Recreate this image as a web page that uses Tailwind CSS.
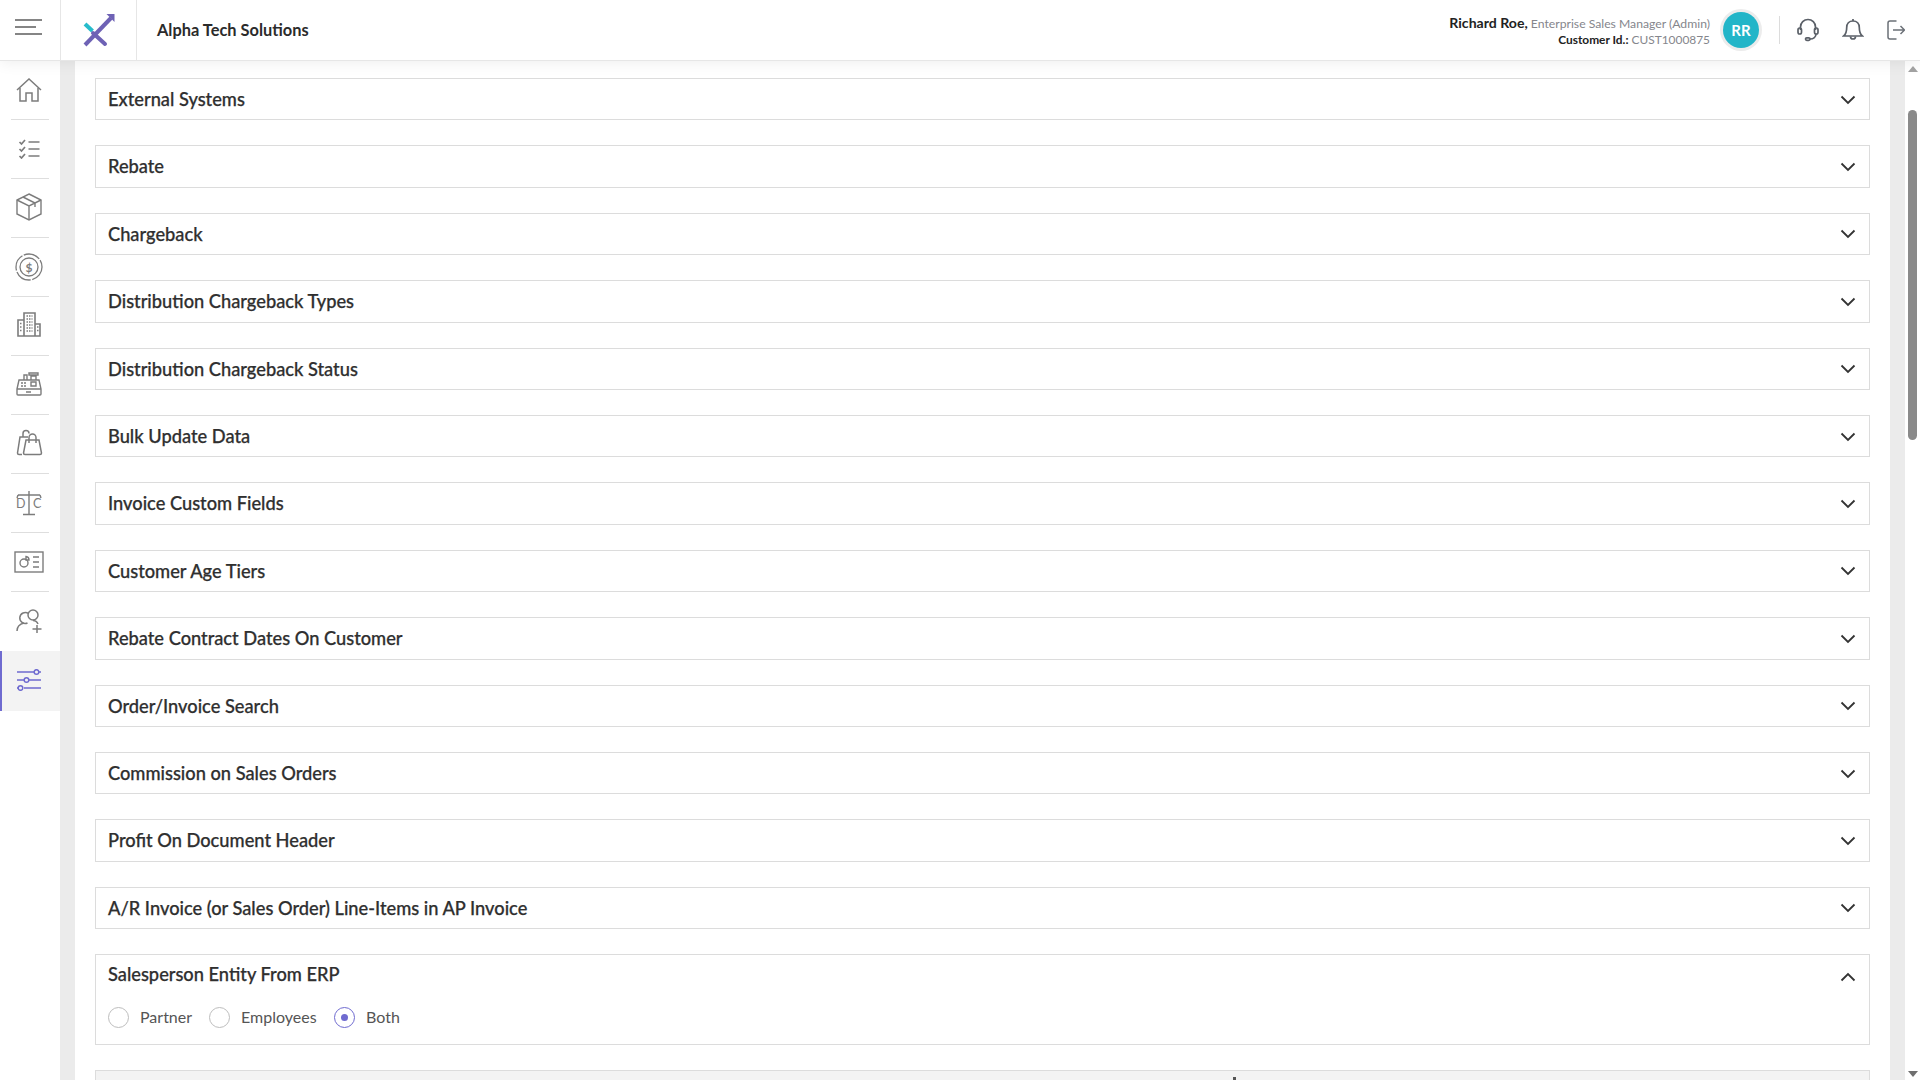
<!DOCTYPE html>
<html lang="en">
<head>
  <meta charset="UTF-8" />
  <title>Alpha Tech Solutions</title>
  <script src="https://cdn.jsdelivr.net/npm/@tailwindcss/browser@4"></script>
</head>
<body class="h-screen overflow-hidden bg-white font-['Lato','Noto_Sans',sans-serif] text-[#2f2f2f]">

  <!-- top bar -->
  <header class="relative z-10 flex h-[61px] items-stretch border-b border-[#e6e6e6] bg-white shadow-[0_2px_14px_rgba(0,0,0,0.07)]">
    <div class="flex w-[61px] items-center border-r border-[#e6e6e6] pl-[15px]">
      <svg class="mb-[7px]" width="28" height="18" viewBox="0 0 28 18" fill="none" stroke="#858585" stroke-width="2"><path d="M0 2h27M0 9h21M0 16h27"/></svg>
    </div>
    <div class="flex w-[76px] items-center justify-center border-r border-[#e6e6e6]">
      <svg width="34" height="34" viewBox="0 0 34 34" fill="none" stroke-width="4">
        <path d="M3 32 29 5" stroke="#6e62b5"/>
        <path d="M24.500 1H32.500V9Z" fill="#6e62b5" stroke="none"/>
        <path d="M3 11l7.500 7" stroke="#27bccb"/>
        <path d="M11 20 23 31" stroke="#6e62b5" stroke-linecap="round"/>
      </svg>
    </div>
    <div class="flex items-center pt-[1px] pl-5 text-[16.400px] font-bold text-[#2b2b2b]">Alpha Tech Solutions</div>

    <div class="ml-auto flex items-center">
      <div class="pt-[2px] text-right text-[12.200px] leading-[16px] text-[#85868c]">
        <div><span class="text-[14.100px] font-bold text-[#222]">Richard Roe,</span> Enterprise Sales Manager (Admin)</div>
        <div class="text-[11.900px]"><span class="font-bold text-[#222]">Customer Id.:</span> CUST1000875</div>
      </div>
      <div class="ml-[10px] flex size-[42px] items-center justify-center rounded-full bg-[#ececec]">
        <div class="flex size-9 items-center justify-center rounded-full bg-[#22b5c8] text-[15px] font-bold text-white">RR</div>
      </div>
      <div class="ml-[17px] h-7 w-px bg-[#dcdcdc]"></div>
      <svg class="ml-[17px]" width="22" height="24" viewBox="0 0 22 24" fill="none" stroke="#5b6068" stroke-width="1.700">
        <path d="M3.500 12V9a7.500 7.500 0 0 1 15 0v3"/>
        <rect x="1" y="10" width="3.500" height="6" rx="1.700"/>
        <rect x="17.500" y="10" width="3.500" height="6" rx="1.700"/>
        <path d="M19 16c0 3-2.500 5-6 5"/>
        <rect x="8.500" y="19.800" width="4.500" height="2.600" rx="1.300"/>
      </svg>
      <svg class="ml-[23px]" width="22" height="24" viewBox="0 0 22 24" fill="none" stroke="#5b6068" stroke-width="1.700">
        <path d="M11 3c-4 0-6.300 3-6.300 6.500 0 5-1.200 7-3 8.500h18.600c-1.800-1.500-3-3.500-3-8.500C17.300 6 15 3 11 3Z"/>
        <path d="M11 1v2M8.500 18.500a2.500 2.500 0 0 0 5 0"/>
      </svg>
      <svg class="mr-[15px] ml-[23px]" width="18" height="20" viewBox="0 0 18 20" fill="none" stroke="#6b7077" stroke-width="1.500">
        <path d="M9.500 1H3a2 2 0 0 0-2 2v14a2 2 0 0 0 2 2h6.500"/>
        <path d="M6 10h11.500M13.500 6l4 4-4 4"/>
      </svg>
    </div>
  </header>

  <div class="flex h-[1019px]">
    <!-- side nav -->
    <nav class="w-[60px] shrink-0 bg-white">
      <a class="mx-[11px] flex h-[59px] items-center justify-center border-b border-[#dedede] pr-[2px]">
        <svg width="26" height="24" viewBox="0 0 26 24" fill="none" stroke="#7c7c7c" stroke-width="1.500">
          <path d="M1 12 13 1l12 11"/><path d="M4 10v13h6v-8h6v8h6V10"/>
        </svg>
      </a>
      <a class="mx-[11px] flex h-[59px] items-center justify-center border-b border-[#dedede] pr-[2px]">
        <svg width="23" height="20" viewBox="0 0 22 20" fill="none" stroke="#7c7c7c" stroke-width="1.700">
          <path d="M1 3l2 2 3.500-4M1 10l2 2 3.500-4M1 17l2 2 3.500-4"/><path d="M10 3h11M10 10h11M10 17h11"/>
        </svg>
      </a>
      <a class="mx-[11px] flex h-[59px] items-center justify-center border-b border-[#dedede] pr-[2px]">
        <svg class="mb-[2px]" width="26" height="28" viewBox="0 0 26 28" fill="none" stroke="#7c7c7c" stroke-width="1.400">
          <path d="M13 1 25 7v14l-12 6-12-6V7Z"/><path d="M1 7l12 6 12-6M13 13v14M7 4l12 6v4"/>
        </svg>
      </a>
      <a class="mx-[11px] flex h-[59px] items-center justify-center border-b border-[#dedede] pr-[2px]">
        <svg class="mb-[1px]" width="28" height="28" viewBox="0 0 28 28" fill="none" stroke="#7c7c7c" stroke-width="1.300">
          <circle cx="14" cy="14" r="13" stroke-dasharray="17 1.500"/><circle cx="14" cy="14" r="9"/>
          <text x="14" y="18.500" text-anchor="middle" font-size="12" font-weight="700" fill="#7c7c7c" stroke="none" font-family="Lato">$</text>
        </svg>
      </a>
      <a class="mx-[11px] flex h-[59px] items-center justify-center border-b border-[#dedede] pr-[2px]">
        <svg class="mb-[4px]" width="24" height="26" viewBox="0 0 24 26" fill="none" stroke="#7c7c7c" stroke-width="1.600">
          <path d="M7 25V2h11v23M7 25V9H1v16ZM18 25V13h5v12ZM1 25h22"/>
          <path d="M9.500 5h6M9.500 8h6M9.500 11h6M9.500 14h6M9.500 17h6M9.500 20h6M3 12.500h2.500M3 16h2.500M3 19.500h2.500M20 16h2M20 19.500h2" stroke-dasharray="1.500 1" stroke-width="1.700"/>
        </svg>
      </a>
      <a class="mx-[11px] flex h-[59px] items-center justify-center border-b border-[#dedede] pr-[2px]">
        <svg class="mb-[4px]" width="26" height="25" viewBox="0 0 26 25" fill="none" stroke="#7c7c7c" stroke-width="1.400">
          <path d="M1 18 3 9h20l2 9v5a1 1 0 0 1-1 1H2a1 1 0 0 1-1-1ZM1 18h24M10 21h5"/>
          <path d="M8 9V4h3v5M15 9V5h5v4M13 2h9v2h-9ZM15 11h5v4h-5Z"/>
          <path d="M5 12h5M5 15h5" stroke-dasharray="2 1"/>
        </svg>
      </a>
      <a class="mx-[11px] flex h-[59px] items-center justify-center border-b border-[#dedede] pr-[2px]">
        <svg class="mb-[3px]" width="27" height="27" viewBox="0 0 27 27" fill="none" stroke="#7c7c7c" stroke-width="1.500">
          <path d="M6 25.500H3c-1 0-1.500-.5-1.500-1.500L4 8h8"/><path d="M7 8V4.500a3 3 0 0 1 6 0"/>
          <path d="M10 11h13l2.500 13c0 .7-.5 1.500-1.500 1.500H9c-1 0-1.500-.7-1.500-1.500Z"/><path d="M13 14V8.500a3.500 3.500 0 0 1 7 0V14"/>
        </svg>
      </a>
      <a class="mx-[11px] flex h-[59px] items-center justify-center border-b border-[#dedede] pr-[2px]">
        <svg width="28" height="26" viewBox="0 0 28 26" fill="none" stroke="#7c7c7c" stroke-width="1.400">
          <path d="M14 1v23M8 24.500h12M3 5h22M3 5l-1 3M25 5l1 3"/>
          <text x="1" y="18" font-size="12.500" fill="#7c7c7c" stroke="none" font-family="Lato">D</text>
          <text x="18" y="18" font-size="12.500" fill="#7c7c7c" stroke="none" font-family="Lato">C</text>
        </svg>
      </a>
      <a class="mx-[11px] flex h-[59px] items-center justify-center border-b border-[#dedede] pr-[2px]">
        <svg width="30" height="22" viewBox="0 0 30 22" fill="none" stroke="#7c7c7c" stroke-width="1.400">
          <rect x="1" y="1" width="28" height="20"/>
          <circle cx="10" cy="12" r="4"/><path d="M12 5.500a3.500 3.500 0 0 1 3 3.500h-3ZM19 6h6M19 11h6M19 16h6"/>
        </svg>
      </a>
      <a class="mx-[11px] flex h-[59px] items-center justify-center pr-[2px]">
        <svg class="mb-[4px]" width="26" height="26" viewBox="0 0 26 26" fill="none" stroke="#7c7c7c" stroke-width="1.500">
          <circle cx="17" cy="8" r="5"/><path d="M12.500 6.500A5.500 5.500 0 1 0 11.500 16"/><path d="M1 24c0-4 3-7 7-8M17 13.500c2.500 0 4 1 5 3.500"/><path d="M21 18v8M16.500 22h9"/>
        </svg>
      </a>
      <!-- active item -->
      <a class="flex h-[60px] items-center justify-center border-l-2 border-[#6f6bd0] bg-[#f3f3f3] pr-[4px]">
        <svg class="mb-[2px]" width="24" height="22" viewBox="0 0 24 22" fill="none" stroke="#6f6bd0" stroke-width="1.500">
          <path d="M0 3h17M22 3h2M0 11h7M12 11h12M0 19h1M7 19h17"/>
          <circle cx="19.500" cy="3" r="2.300"/><circle cx="9.500" cy="11" r="2.300"/><circle cx="3.500" cy="19" r="2.300"/>
        </svg>
      </a>
    </nav>

    <div class="w-[15px] shrink-0 bg-[#ebebeb]"></div>

    <!-- settings list -->
    <main class="w-[1815px] shrink-0 overflow-hidden px-5 pt-[17px] text-[18.250px] font-medium [-webkit-text-stroke:0.25px]">
      <div class="mb-[25px] flex h-[42.400px] items-center justify-between border border-[#dcdcdc] pr-[13px] pl-[12px]"><span class="pt-[1px]">External Systems</span><svg class="mt-[1px]" width="16" height="10" viewBox="0 0 16 10" fill="none" stroke="#333" stroke-width="1.800"><path d="M1.500 1.500 8 8l6.500-6.500"/></svg></div>
      <div class="mb-[25px] flex h-[42.400px] items-center justify-between border border-[#dcdcdc] pr-[13px] pl-[12px]"><span class="pt-[1px]">Rebate</span><svg class="mt-[1px]" width="16" height="10" viewBox="0 0 16 10" fill="none" stroke="#333" stroke-width="1.800"><path d="M1.500 1.500 8 8l6.500-6.500"/></svg></div>
      <div class="mb-[25px] flex h-[42.400px] items-center justify-between border border-[#dcdcdc] pr-[13px] pl-[12px]"><span class="pt-[1px]">Chargeback</span><svg class="mt-[1px]" width="16" height="10" viewBox="0 0 16 10" fill="none" stroke="#333" stroke-width="1.800"><path d="M1.500 1.500 8 8l6.500-6.500"/></svg></div>
      <div class="mb-[25px] flex h-[42.400px] items-center justify-between border border-[#dcdcdc] pr-[13px] pl-[12px]"><span class="pt-[1px]">Distribution Chargeback Types</span><svg class="mt-[1px]" width="16" height="10" viewBox="0 0 16 10" fill="none" stroke="#333" stroke-width="1.800"><path d="M1.500 1.500 8 8l6.500-6.500"/></svg></div>
      <div class="mb-[25px] flex h-[42.400px] items-center justify-between border border-[#dcdcdc] pr-[13px] pl-[12px]"><span class="pt-[1px]">Distribution Chargeback Status</span><svg class="mt-[1px]" width="16" height="10" viewBox="0 0 16 10" fill="none" stroke="#333" stroke-width="1.800"><path d="M1.500 1.500 8 8l6.500-6.500"/></svg></div>
      <div class="mb-[25px] flex h-[42.400px] items-center justify-between border border-[#dcdcdc] pr-[13px] pl-[12px]"><span class="pt-[1px]">Bulk Update Data</span><svg class="mt-[1px]" width="16" height="10" viewBox="0 0 16 10" fill="none" stroke="#333" stroke-width="1.800"><path d="M1.500 1.500 8 8l6.500-6.500"/></svg></div>
      <div class="mb-[25px] flex h-[42.400px] items-center justify-between border border-[#dcdcdc] pr-[13px] pl-[12px]"><span class="pt-[1px]">Invoice Custom Fields</span><svg class="mt-[1px]" width="16" height="10" viewBox="0 0 16 10" fill="none" stroke="#333" stroke-width="1.800"><path d="M1.500 1.500 8 8l6.500-6.500"/></svg></div>
      <div class="mb-[25px] flex h-[42.400px] items-center justify-between border border-[#dcdcdc] pr-[13px] pl-[12px]"><span class="pt-[1px]">Customer Age Tiers</span><svg class="mt-[1px]" width="16" height="10" viewBox="0 0 16 10" fill="none" stroke="#333" stroke-width="1.800"><path d="M1.500 1.500 8 8l6.500-6.500"/></svg></div>
      <div class="mb-[25px] flex h-[42.400px] items-center justify-between border border-[#dcdcdc] pr-[13px] pl-[12px]"><span class="pt-[1px]">Rebate Contract Dates On Customer</span><svg class="mt-[1px]" width="16" height="10" viewBox="0 0 16 10" fill="none" stroke="#333" stroke-width="1.800"><path d="M1.500 1.500 8 8l6.500-6.500"/></svg></div>
      <div class="mb-[25px] flex h-[42.400px] items-center justify-between border border-[#dcdcdc] pr-[13px] pl-[12px]"><span class="pt-[1px]">Order/Invoice Search</span><svg class="mt-[1px]" width="16" height="10" viewBox="0 0 16 10" fill="none" stroke="#333" stroke-width="1.800"><path d="M1.500 1.500 8 8l6.500-6.500"/></svg></div>
      <div class="mb-[25px] flex h-[42.400px] items-center justify-between border border-[#dcdcdc] pr-[13px] pl-[12px]"><span class="pt-[1px]">Commission on Sales Orders</span><svg class="mt-[1px]" width="16" height="10" viewBox="0 0 16 10" fill="none" stroke="#333" stroke-width="1.800"><path d="M1.500 1.500 8 8l6.500-6.500"/></svg></div>
      <div class="mb-[25px] flex h-[42.400px] items-center justify-between border border-[#dcdcdc] pr-[13px] pl-[12px]"><span class="pt-[1px]">Profit On Document Header</span><svg class="mt-[1px]" width="16" height="10" viewBox="0 0 16 10" fill="none" stroke="#333" stroke-width="1.800"><path d="M1.500 1.500 8 8l6.500-6.500"/></svg></div>
      <div class="mb-[25px] flex h-[42.400px] items-center justify-between border border-[#dcdcdc] pr-[13px] pl-[12px]"><span class="pt-[1px]">A/R Invoice (or Sales Order) Line-Items in AP Invoice</span><svg class="mt-[1px]" width="16" height="10" viewBox="0 0 16 10" fill="none" stroke="#333" stroke-width="1.800"><path d="M1.500 1.500 8 8l6.500-6.500"/></svg></div>

      <!-- open panel -->
      <div class="mb-[25px] h-[91px] border border-[#dcdcdc] pr-[13px] pl-[12px]">
        <div class="flex h-[39px] items-center justify-between"><span class="pt-[1px]">Salesperson Entity From ERP</span><svg class="mt-[4px]" width="16" height="10" viewBox="0 0 16 10" fill="none" stroke="#333" stroke-width="1.800"><path d="M1.500 8.500 8 2l6.500 6.500"/></svg></div>
        <div class="mt-[11px] flex items-center text-[16px] font-normal text-[#555] [-webkit-text-stroke:0]">
          <span class="size-[21px] rounded-full border border-[#bdbdbd]"></span><span class="ml-[11px] w-[52px]">Partner</span>
          <span class="ml-[17px] size-[21px] rounded-full border border-[#bdbdbd]"></span><span class="ml-[11px] w-[76px]">Employees</span>
          <span class="ml-[17px] flex size-[21px] items-center justify-center rounded-full border border-[#6f6bd0]"><span class="size-[7px] rounded-full bg-[#6f6bd0]"></span></span><span class="ml-[11px]">Both</span>
        </div>
      </div>
      <div class="h-[42.400px] border border-[#dcdcdc] bg-[#f3f3f3] pt-[6px] pl-[1137px]"><div class="size-[3px] bg-[#555]"></div></div>
    </main>

    <div class="w-[15px] shrink-0 bg-[#ebebeb]"></div>

    <!-- scrollbar -->
    <div class="flex w-[15px] shrink-0 flex-col items-center bg-white pt-[5px]">
      <span class="h-0 w-0 border-x-[5px] border-b-[6px] border-x-transparent border-b-[#a3a3a3]"></span>
      <span class="mt-[38px] h-[330px] w-[9px] rounded-full bg-[#8a8a8a]"></span>
      <span class="mt-auto mb-[3px] h-0 w-0 border-x-[5px] border-t-[6px] border-x-transparent border-t-[#6f6f6f]"></span>
    </div>
  </div>
</body>
</html>
